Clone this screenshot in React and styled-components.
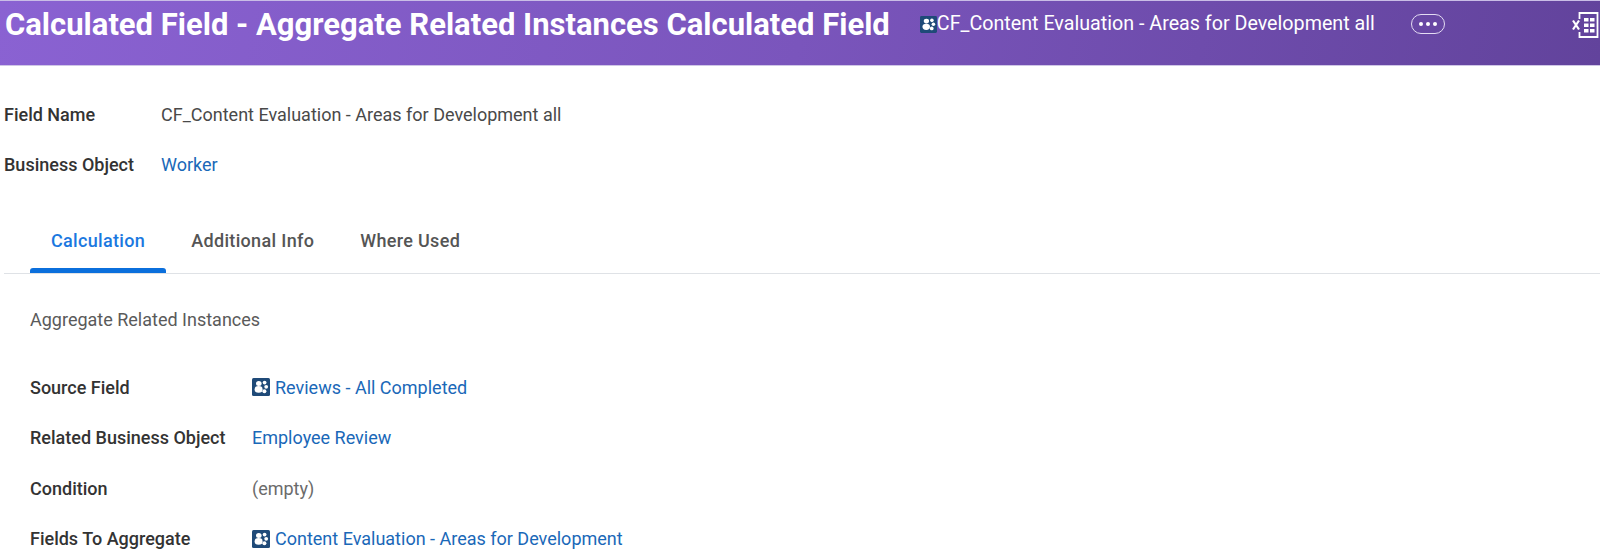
import React from 'react'
import styled, { createGlobalStyle } from 'styled-components'

const GlobalStyle = createGlobalStyle`
  html, body {
    margin: 0;
    background: #fff;
    overflow: hidden;
  }
  body {
    font-family: Roboto, "Liberation Sans", sans-serif;
    color: #333;
  }
`

const ObjectIcon = ({ size = 18, bg = '#1f4a78' }) => (
  <svg width={size} height={size} viewBox="0 0 18 18" style={{ flex: 'none' }}>
    <rect width="18" height="18" rx="1.5" fill={bg} />
    <ellipse cx="6.8" cy="5.4" rx="2.8" ry="2.5" fill="#fff" />
    <circle cx="12.6" cy="4.6" r="1.9" fill="#fff" />
    <circle cx="14.2" cy="8.8" r="1.9" fill="#fff" />
    <circle cx="12.4" cy="13.2" r="2" fill="#fff" />
    <ellipse cx="6.6" cy="11.4" rx="4" ry="3.3" fill="#fff" />
  </svg>
)

const ExcelIcon = () => (
  <svg width="27" height="28" viewBox="0 0 27 28" fill="none">
    <path d="M7.5 8V2h18v24h-18v-5" stroke="#fff" strokeWidth="1.8" />
    <path d="M1 9.5l6 9M7 9.5l-6 9" stroke="#fff" strokeWidth="2.2" />
    <path d="M12 7h4.5v3.5H12zM18 7h4.5v3.5H18zM12 12.5h4.5V16H12zM18 12.5h4.5V16H18zM12 18h4.5v3.5H12zM18 18h4.5v3.5H18z" fill="#fff" />
  </svg>
)

export default function App() {
  return (
    <Page>
      <GlobalStyle />
      <Header>
        <Title>Calculated Field - Aggregate Related Instances Calculated Field</Title>
        <Instance>
          <ObjectIcon size={17} />
          <span>CF_Content Evaluation - Areas for Development all</span>
        </Instance>
        <MoreButton><i /><i /><i /></MoreButton>
        <ExportButton><ExcelIcon /></ExportButton>
      </Header>

      <Summary>
        <SummaryRow>
          <SummaryLabel>Field Name</SummaryLabel>
          <Plain>CF_Content Evaluation - Areas for Development all</Plain>
        </SummaryRow>
        <SummaryRow>
          <SummaryLabel>Business Object</SummaryLabel>
          <Link>Worker</Link>
        </SummaryRow>
      </Summary>

      <Tabs>
        <Tab $active>Calculation</Tab>
        <Tab>Additional Info</Tab>
        <Tab>Where Used</Tab>
      </Tabs>

      <Content>
        <Description>Aggregate Related Instances</Description>
        <FieldRow>
          <FieldLabel>Source Field</FieldLabel>
          <Link><ObjectIcon /> Reviews - All Completed</Link>
        </FieldRow>
        <FieldRow>
          <FieldLabel>Related Business Object</FieldLabel>
          <Link>Employee Review</Link>
        </FieldRow>
        <FieldRow>
          <FieldLabel>Condition</FieldLabel>
          <Empty>(empty)</Empty>
        </FieldRow>
        <FieldRow>
          <FieldLabel>Fields To Aggregate</FieldLabel>
          <Link><ObjectIcon /> Content Evaluation - Areas for Development</Link>
        </FieldRow>
      </Content>
    </Page>
  )
}

const Page = styled.div`
  width: 1600px;
  height: 556px;
  overflow: hidden;
`

const Header = styled.header`
  height: 66px;
  box-sizing: border-box;
  border-top: 1px solid #c9bde6;
  border-bottom: 1px solid #cfc6e6;
  padding: 6px 0 0 5px;
  display: flex;
  align-items: flex-start;
  color: #fff;
  background: linear-gradient(100deg, #8a62d2 0%, #7a55bc 50%, #62439c 100%);
`

const Title = styled.h1`
  margin: 0;
  font-size: 31px;
  line-height: 36px;
  font-weight: 700;
  white-space: nowrap;
`

const Instance = styled.div`
  margin: 5px 0 0 30px;
  display: flex;
  align-items: center;
  font-size: 19.7px;
  line-height: 24px;
  white-space: nowrap;
`

const MoreButton = styled.div`
  margin: 7px 0 0 36px;
  width: 34px;
  height: 20px;
  box-sizing: border-box;
  border: 1.5px solid #e4dcf3;
  border-radius: 10px;
  display: flex;
  align-items: center;
  justify-content: center;
  gap: 3px;

  i {
    width: 4px;
    height: 4px;
    border-radius: 50%;
    background: #fff;
  }
`

const ExportButton = styled.div`
  margin: 4px 0 0 auto;
  width: 28px;
  height: 28px;
`

const Summary = styled.section`
  padding: 35px 0 0 4px;
  display: flex;
  flex-direction: column;
  gap: 24px;
`

const SummaryRow = styled.div`
  display: flex;
  align-items: center;
  height: 26px;
  font-size: 18px;
`

const SummaryLabel = styled.div`
  width: 157px;
  font-weight: 500;
  color: #333;
`

const Plain = styled.div`
  color: #494949;
`

const Link = styled.a`
  display: flex;
  align-items: center;
  gap: 5px;
  color: #1a68b8;
`

const Tabs = styled.nav`
  margin: 39px 0 0 4px;
  height: 58px;
  box-sizing: border-box;
  padding-left: 26px;
  border-bottom: 1px solid #dfe2e6;
  display: flex;
  gap: 4px;
`

const Tab = styled.div`
  position: relative;
  padding: 0 21px;
  height: 58px;
  box-sizing: border-box;
  line-height: 50px;
  font-size: 18px;
  font-weight: 500;
  letter-spacing: 0.33px;
  color: ${props => (props.$active ? '#1a78e0' : '#555')};

  &::after {
    content: '';
    display: ${props => (props.$active ? 'block' : 'none')};
    position: absolute;
    left: 0;
    right: 0;
    bottom: 1px;
    height: 5px;
    border-radius: 3px 3px 0 0;
    background: #0b6fdc;
  }
`

const Content = styled.section`
  padding: 33px 0 0 30px;
`

const Description = styled.div`
  font-size: 18px;
  line-height: 26px;
  color: #5a5a5a;
  margin-bottom: 41px;
`

const FieldRow = styled.div`
  display: flex;
  align-items: center;
  height: 26px;
  margin-bottom: 24.5px;
  font-size: 18px;
`

const FieldLabel = styled.div`
  width: 222px;
  font-weight: 500;
  color: #333;
`

const Empty = styled.div`
  color: #6b6b6b;
`
